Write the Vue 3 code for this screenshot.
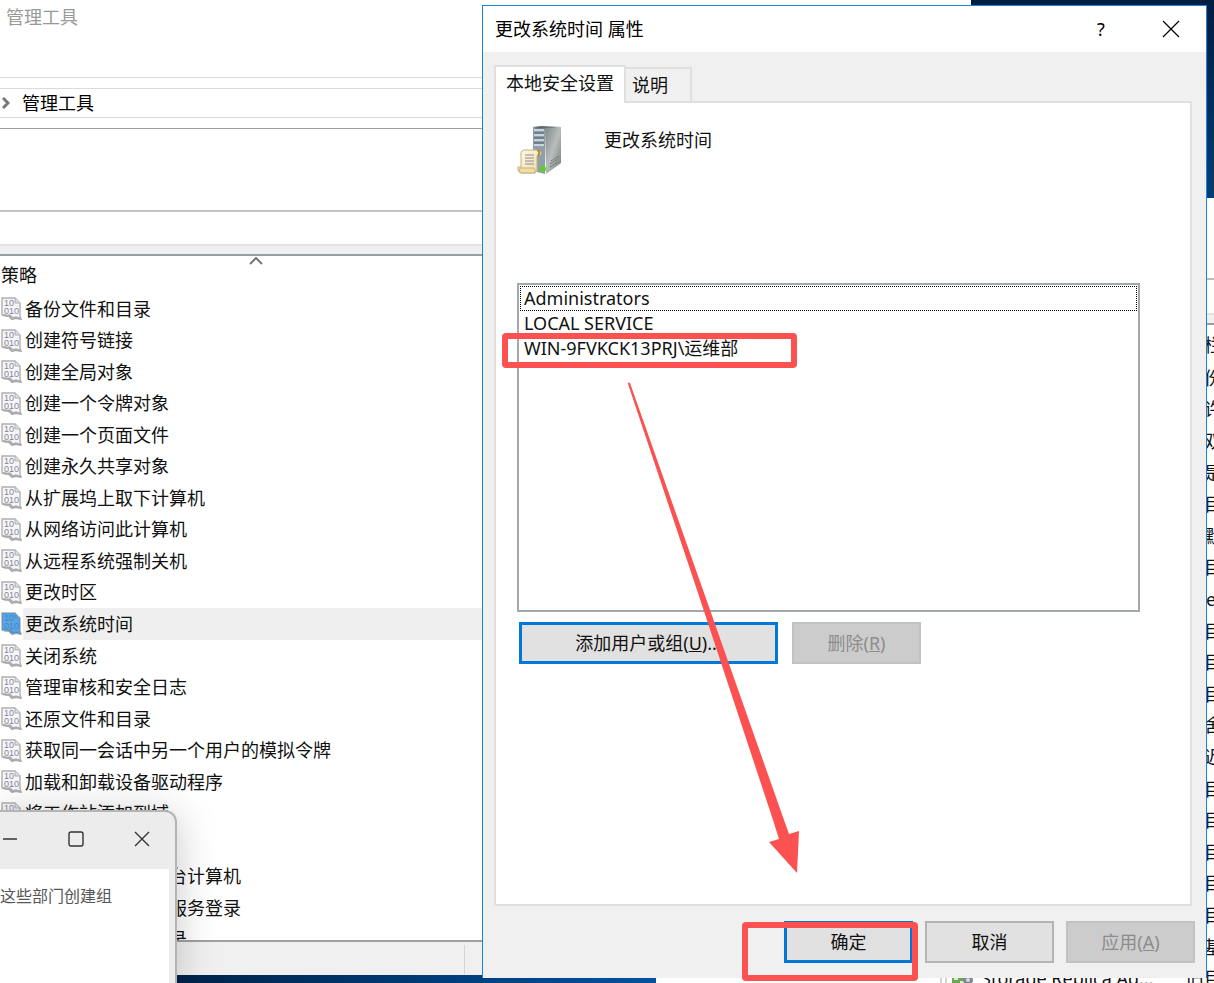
<template>
    <div class="desktop">
        <!-- server manager tools list, mostly behind the dialog -->
        <section class="window toolsWindow">
            <div class="toolsTop"></div>
            <div class="toolsSearch"></div>
            <div class="band"></div>
            <div class="toolsHeader"><span>栏栏</span></div>
            <ul class="toolsList">
                <li v-for="(tool, index) in tools" :key="index">
                    <span class="toolName">
                        <template v-if="tool.name">
                            <svg class="toolIcon" width="36" height="20" viewBox="0 0 36 20">
                                <path d="M1 0V20M6 0V20" stroke="#aaa" fill="none" />
                                <rect x="12" y="10" width="13" height="9" rx="2" fill="#69a84f" />
                                <path d="M14 13H18M20 16H24" stroke="#d8efc8" stroke-width="2" />
                                <circle cx="28" cy="14" r="5" fill="#7d8791" />
                                <circle cx="28" cy="14" r="2" fill="#d5dae0" />
                            </svg>
                            {{ tool.name }}
                        </template>
                    </span>
                    <span>{{ tool.desc }}</span>
                </li>
            </ul>
        </section>

        <!-- local security policy -->
        <section class="window policyWindow">
            <div class="policyTitle">管理工具</div>
            <div class="address">
                <svg width="8" height="12" viewBox="0 0 8 12">
                    <path d="M1 1L6 6L1 11" fill="none" stroke="#777" stroke-width="3" />
                </svg>
                <span>管理工具</span>
            </div>
            <div class="menuPanel"></div>
            <div class="toolbar"></div>
            <div class="band"></div>
            <div class="columnHeader">
                <span>策略</span>
                <svg class="sortMark" width="14" height="8" viewBox="0 0 14 8">
                    <path d="M1 7L7 1L13 7" fill="none" stroke="#777" stroke-width="2" />
                </svg>
            </div>
            <div class="policyBody">
                <ul class="policyList">
                    <li v-for="policy in policies" :key="policy" :class="{ selected: policy === current }">
                        <svg width="22" height="23" viewBox="0 0 22 23">
                            <path class="paper" d="M2 1H15L20 6V19L21 22L16 20L13 21L10 18L6 19L2 18Z" />
                            <path class="fold" d="M15 1V6H20" />
                            <path class="curl" d="M3 18L9 19L12 22L16 21L21 22" />
                            <text x="4" y="9">10</text>
                            <text x="4" y="17">010</text>
                            <path v-if="policy === current" class="tint" d="M2 1H15L20 6V19L21 22L16 21L12 22L9 19L2 18Z" />
                        </svg>
                        <span>{{ policy }}</span>
                    </li>
                </ul>
            </div>
            <div class="statusBar"><i></i></div>
        </section>

        <!-- note window in the corner -->
        <section class="noteWindow">
            <div class="noteBar">
                <button type="button" aria-label="最小化">
                    <svg width="16" height="16" viewBox="0 0 16 16"><path d="M1 8H15" /></svg>
                </button>
                <button type="button" aria-label="最大化">
                    <svg width="16" height="16" viewBox="0 0 16 16"><rect x="1" y="1" width="14" height="14" rx="2" /></svg>
                </button>
                <button type="button" aria-label="关闭">
                    <svg width="16" height="16" viewBox="0 0 16 16"><path d="M1 1L15 15M15 1L1 15" /></svg>
                </button>
            </div>
            <div class="noteText">这些部门创建组</div>
        </section>

        <!-- properties dialog -->
        <section class="dialog" role="dialog" aria-labelledby="dialogTitle">
            <header class="dialogTitle">
                <span id="dialogTitle">{{ current }} 属性</span>
                <button type="button" class="help" aria-label="帮助">?</button>
                <button type="button" aria-label="关闭">
                    <svg width="18" height="18" viewBox="0 0 18 18">
                        <path d="M1 1L17 17M17 1L1 17" fill="none" stroke="#000" stroke-width="1.2" />
                    </svg>
                </button>
            </header>
            <div class="tabs" role="tablist">
                <button v-for="tab in tabs" :key="tab" type="button" role="tab" class="tab"
                    :class="{ active: tab === activeTab }" :aria-selected="tab === activeTab"
                    @click="activeTab = tab">{{ tab }}</button>
            </div>
            <div class="panel">
                <div class="summary">
                    <svg width="46" height="50" viewBox="0 0 46 50">
                        <defs>
                            <linearGradient id="side" x1="0" y1="0" x2="1" y2="1">
                                <stop offset="0" stop-color="#7f8886" />
                                <stop offset=".5" stop-color="#b7bebc" />
                                <stop offset="1" stop-color="#6e7775" />
                            </linearGradient>
                            <linearGradient id="scroll" x1="0" y1="0" x2="1" y2="1">
                                <stop offset="0" stop-color="#fffbe6" />
                                <stop offset="1" stop-color="#ecd9a0" />
                            </linearGradient>
                        </defs>
                        <path d="M16 2L28 3V49L16 46Z" fill="#8f9ea9" />
                        <path d="M16 2L24 1L44 2L28 4Z" fill="#606c70" />
                        <path d="M28 3L44 2V38L29 49Z" fill="url(#side)" />
                        <path d="M17 5H27M17 10H27M17 15H27M17 20H27" stroke="#c9d5dd" stroke-width="2" />
                        <path d="M18 3H25M17 8H27M17 13H27M17 18H27" stroke="#50606c" />
                        <path d="M33 39L41 34M33 42L41 37M34 36L42 31" stroke="#66706e" stroke-dasharray="2 1" />
                        <path d="M7 25Q3 26 4 31V42H1Q0 47 4 48H18Q21 47 20 43V31Q25 31 24 27Q23 25 20 25Z"
                            fill="url(#scroll)" stroke="#c4b07c" />
                        <path d="M3 43H17Q19 45 18 48H4Q1 46 3 43Z" fill="#f0deaa" stroke="#c4b07c" />
                        <path d="M8 30H17M8 33H17M8 36H17M8 39H17" stroke="#8c88a4" />
                        <path d="M20 25Q24 26 21 31" fill="none" stroke="#b08a3c" stroke-width="2" />
                        <circle cx="26" cy="44" r="3" fill="#5bd128" />
                    </svg>
                    <span>{{ current }}</span>
                </div>
                <ul class="accounts" role="listbox" aria-label="用户和组">
                    <li v-for="(account, index) in accounts" :key="account" role="option"
                        :class="{ focused: index === focusedIndex }" @click="focusedIndex = index">{{ account }}</li>
                </ul>
                <div class="panelButtons">
                    <button type="button" class="btn primary wide">添加用户或组(<u>U</u>)...</button>
                    <button type="button" class="btn" disabled>删除(<u>R</u>)</button>
                </div>
            </div>
            <footer class="dialogFooter">
                <button type="button" class="btn primary">确定</button>
                <button type="button" class="btn">取消</button>
                <button type="button" class="btn" disabled>应用(<u>A</u>)</button>
            </footer>

            <div class="mark markAccount"></div>
            <div class="mark markConfirm"></div>
            <svg class="arrow" width="174" height="494" viewBox="0 0 174 494">
                <path d="M1 1Q2 0 3 1L76 208L157 438L162 452L172 449L170 491L142 460L152 457L146 438L70 208L1 2Z" />
            </svg>
        </section>
    </div>
</template>

<script setup>
import { ref } from 'vue'

const current = '更改系统时间'

const policies = [
    '备份文件和目录',
    '创建符号链接',
    '创建全局对象',
    '创建一个令牌对象',
    '创建一个页面文件',
    '创建永久共享对象',
    '从扩展坞上取下计算机',
    '从网络访问此计算机',
    '从远程系统强制关机',
    '更改时区',
    '更改系统时间',
    '关闭系统',
    '管理审核和安全日志',
    '还原文件和目录',
    '获取同一会话中另一个用户的模拟令牌',
    '加载和卸载设备驱动程序',
    '将工作站添加到域',
    '拒绝本地登录',
    '拒绝从网络访问这台计算机',
    '拒绝通过远程桌面服务登录',
    '拒绝以服务身份登录'
]

const tabs = ['本地安全设置', '说明']
const activeTab = ref(tabs[0])

const accounts = ['Administrators', 'LOCAL SERVICE', 'WIN-9FVKCK13PRJ\\运维部']
const focusedIndex = ref(0)

const tools = [
    '身份', '允许', '网双', '管是', '项目', '沉默', '项目', 'See', '项目', '项目',
    '项目', '宿舍', '延迟', '项目', '项目', '项目', '项目', '项目', '地基'
].map(desc => ({ desc }))
tools.push({ name: 'Storage Replica Ad...', desc: '旧目' })
</script>

<style>
body {
    margin: 0;
}
</style>

<style scoped>
.desktop {
    position: relative;
    min-height: 100vh;
    overflow: hidden;
    background:
        linear-gradient(90deg, #00234a 15%, #0052a0 54%) bottom / 100% 50% no-repeat,
        linear-gradient(#001d42, #003f78 200px);
    font-family: "Noto Sans", "Noto Sans CJK SC", sans-serif;
    font-size: 18px;
    line-height: 24px;
    color: #111;
}

ul {
    list-style: none;
    margin: 0;
    padding: 0;
}

button {
    font: inherit;
    color: inherit;
    margin: 0;
    padding: 0;
    border: none;
    background: none;
}

.window {
    position: absolute;
    display: flex;
    flex-direction: column;
    overflow: hidden;
    background: #fff;
    white-space: nowrap;
}

.window > div {
    flex-shrink: 0;
}

.band {
    height: 8px;
    background: #f0f0f0;
    border-top: 2px solid #e3e3e3;
    border-bottom: 2px solid #999ea6;
}

.toolsWindow {
    left: 54%;
    right: 0;
    top: 198px;
    bottom: 0;
}

.toolsTop {
    height: 80px;
    border-bottom: 2px solid #bbb;
}

.toolsSearch {
    height: 33px;
}

.toolsHeader {
    display: flex;
    justify-content: flex-end;
    height: 29px;
    padding-top: 8px;
    margin-right: -8px;
}

.toolsList {
    display: grid;
    grid-template-rows: repeat(20, 1fr);
    height: 632px;
    flex-shrink: 0;
    margin-right: -8px;
}

.toolsList li {
    display: flex;
    justify-content: flex-end;
    align-items: center;
}

.toolsList li > span:last-child {
    width: 36px;
}

.toolName {
    display: flex;
    width: 246px;
    gap: 5px;
}

.policyWindow {
    left: 0;
    top: 0;
    bottom: 8px;
    width: 80%;
}

.policyTitle {
    height: 72px;
    padding: 5px 6px 0;
    border-bottom: 1px solid #dcdcdc;
    color: #999;
}

.address {
    display: flex;
    align-items: center;
    gap: 12px;
    height: 28px;
    margin: 10px 0;
    padding-left: 2px;
    border-top: 1px solid #dadada;
    border-bottom: 1px solid #dadada;
    color: #000;
}

.menuPanel {
    height: 81px;
    border-top: 1px solid #a0a0a0;
    border-bottom: 2px solid #c4c4c4;
}

.toolbar {
    height: 32px;
}

.columnHeader {
    position: relative;
    height: 30px;
    padding: 7px 1px 0;
}

.sortMark {
    position: absolute;
    left: 249px;
    top: 1px;
}

.window > .policyBody {
    flex: 1 1 0;
    min-height: 0;
    overflow: hidden;
}

.policyList {
    display: grid;
    grid-template-rows: repeat(21, 1fr);
    height: 662px;
}

.policyList li {
    display: flex;
    align-items: stretch;
    gap: 1px;
}

.policyList svg {
    align-self: center;
    flex: none;
}

.policyList span {
    flex: 1;
    display: flex;
    align-items: center;
    padding-left: 2px;
}

.policyList .selected span {
    background: #efefef;
}

.paper {
    fill: #f6f6f6;
    stroke: #b0b0b0;
    stroke-width: 1.4;
}

.fold {
    fill: #ddd;
    stroke: #b0b0b0;
}

.curl {
    fill: none;
    stroke: #aaa;
    stroke-width: 2;
}

.policyList text {
    font-family: "Liberation Sans", sans-serif;
    font-size: 9px;
    fill: #8582a0;
}

.tint {
    fill: #2b88d8;
    fill-opacity: .75;
}

.statusBar {
    display: flex;
    height: 33px;
    border-top: 2px solid #a0a0a0;
    background: #f0f0f0;
}

.statusBar i {
    width: 464px;
    margin: 3px 0 1px;
    border-right: 1px solid #d4d4d4;
}

.noteWindow {
    position: absolute;
    left: 0;
    bottom: 0;
    width: 175px;
    height: 171px;
    display: flex;
    flex-direction: column;
    overflow: hidden;
    border: 2px solid #b4b4b4;
    border-width: 2px 2px 0 0;
    border-top-right-radius: 12px;
    background: #ececec;
    box-shadow: 0 4px 40px rgba(0, 0, 0, .22);
}

.noteBar {
    display: flex;
    justify-content: flex-end;
    height: 53px;
    padding-bottom: 4px;
}

.noteBar button {
    width: 66px;
    flex: none;
}

.noteBar svg {
    display: block;
    margin: auto;
    fill: none;
    stroke: #333;
    stroke-width: 1.4;
}

.noteText {
    flex: 1;
    margin-right: 6px;
    padding-top: 15px;
    background: #fff;
    color: #555;
    font-size: 16px;
    white-space: nowrap;
}

.dialog {
    position: absolute;
    left: 482px;
    right: 7px;
    top: 5px;
    bottom: 5px;
    display: flex;
    flex-direction: column;
    border: 1px solid #1883d7;
    border-bottom: none;
    background: #f0f0f0;
}

.dialogTitle {
    display: flex;
    align-items: center;
    height: 46px;
    padding-left: 12px;
    background: #fff;
    color: #000;
}

.dialogTitle span {
    flex: 1;
}

.dialogTitle button {
    width: 70px;
    height: 46px;
}

.dialogTitle svg {
    display: block;
    margin: auto;
}

.tabs {
    display: flex;
    align-items: flex-end;
    margin: 13px 11px 0;
}

.tab {
    height: 34px;
    padding: 0 22px 0 6px;
    border: 2px solid #e0e0e0;
    border-left: none;
    border-bottom: none;
}

.tab.active {
    z-index: 1;
    height: 38px;
    margin-bottom: -2px;
    padding: 0 10px 4px;
    border-left: 2px solid #e0e0e0;
    background: #fff;
}

.panel {
    flex: 1;
    margin: 0 14px 0 11px;
    border: 2px solid #e0e0e0;
    background: #fff;
}

.summary {
    display: flex;
    gap: 41px;
    height: 158px;
    padding: 22px 21px 0;
}

.summary span {
    padding-top: 3px;
}

.accounts {
    height: 323px;
    margin: 0 50px 0 21px;
    padding: 1px;
    border: 2px solid #a3a7ae;
}

.accounts li {
    padding: 0 3px;
    border: 1px solid transparent;
    line-height: 23px;
}

.accounts .focused {
    border: 1px dotted #000;
}

.panelButtons {
    display: flex;
    gap: 14px;
    margin: 10px 23px;
}

.btn {
    box-sizing: border-box;
    width: 129px;
    height: 42px;
    border: 2px solid #b4b4b4;
    background: #e1e1e1;
}

.btn.wide {
    width: 259px;
}

.btn.primary {
    border: 3px solid #0078d7;
}

.btn:disabled {
    border-color: #c2c2c2;
    background: #ccc;
    color: #8c8c8c;
}

.dialogFooter {
    display: flex;
    justify-content: flex-end;
    gap: 12px;
    padding: 15px 11px;
}

/* red call-outs over the dialog */
.mark {
    position: absolute;
    box-sizing: border-box;
    border: 6px solid #fb5151;
    border-radius: 4px;
    pointer-events: none;
}

.markAccount {
    left: 19px;
    top: 327px;
    width: 295px;
    height: 35px;
}

.markConfirm {
    right: 288px;
    bottom: -3px;
    width: 176px;
    height: 59px;
}

.arrow {
    position: absolute;
    left: 144px;
    top: 376px;
    fill: #fb5151;
    pointer-events: none;
}
</style>
